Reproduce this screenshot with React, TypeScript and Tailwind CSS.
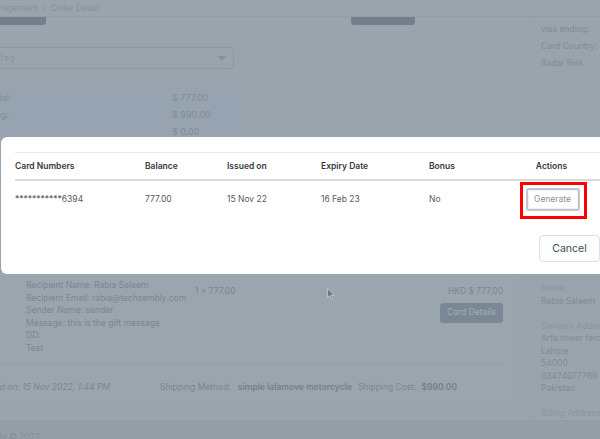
import React from "react";

const font = { fontFamily: "Inter, 'Noto Sans', sans-serif" };

function Line({ children, className = "" }: { children: React.ReactNode; className?: string }) {
  return <div className={`h-[12.5px] leading-[12.5px] whitespace-nowrap ${className}`}>{children}</div>;
}

export default function App() {
  return (
    <div style={font} className="relative w-[600px] h-[439px] overflow-hidden bg-[#9aa4ad] text-[#7b8590] text-[8.5px]">
      {/* header */}
      <div className="h-[17px] border-b border-[#939da6] flex items-center">
        <div className="ml-[-40px] text-[8.5px] text-[#8592a2] flex gap-[5px] whitespace-nowrap">
          <span>Order Management</span>
          <span>/</span>
          <span>Order Detail</span>
        </div>
      </div>

      <div className="flex">
        {/* left column */}
        <div className="w-[515px] shrink-0">
          <div className="flex h-[8px]">
            <div className="ml-[-10px] w-[56px] h-[8px] rounded-b-[3px] bg-[#737f8c]" />
            <div className="ml-[305px] w-[64px] h-[8px] rounded-b-[3px] bg-[#737f8c]" />
          </div>
          <div className="mt-[22px] ml-[-10px] w-[244px] h-[22px] rounded-[3px] border border-[#8e99a5] flex items-center justify-between pl-[8px] pr-[7px] text-[#8b95a0] text-[9px]">
            <span>Tag</span>
            <svg width="8" height="5" viewBox="0 0 8 5"><path d="M0 0h8L4 5z" fill="#87919c" /></svg>
          </div>
          <div className="mt-[14px] ml-[-40px] w-[282px] h-[100px] bg-[#97a3b0] pt-[6px] text-[#818c98] text-[9px]">
            <div className="flex h-[17px] items-center whitespace-nowrap"><span className="w-[212px] pl-[9px]">Sub Total:</span><span>$ 777.00</span></div>
            <div className="flex h-[17px] items-center whitespace-nowrap"><span className="w-[212px] pl-[9px]">Shipping:</span><span>$ 990.00</span></div>
            <div className="flex h-[17px] items-center whitespace-nowrap"><span className="w-[212px] pl-[9px]">Tax:</span><span>$ 0.00</span></div>
          </div>

          {/* gift card panel */}
          <div className="mt-[91px] ml-[-10px] w-[523px] h-[129px] bg-[#9ba5ae] pt-[5px]">
            <div className="flex">
              <div className="ml-[36px] w-[169px]">
                <Line>Recipient Name: Rabia Saleem</Line>
                <Line>Recipient Email: rabia@techsembly.com</Line>
                <Line>Sender Name: sender</Line>
                <Line>Message: this is the gift message</Line>
                <Line>DD:</Line>
                <Line>Test</Line>
              </div>
              <div className="pt-[6px] w-[130px] leading-[12.5px] whitespace-nowrap">1 × 777.00</div>
              <div className="flex-1 flex flex-col items-end pr-[10px] pt-[6px]">
                <div className="leading-[12.5px] whitespace-nowrap">HKD $ 777.00</div>
                <div className="mt-[5px] w-[63px] h-[20px] rounded-[3px] bg-[#7a8795] text-[#a3aeb9] flex items-center justify-center whitespace-nowrap">Card Details</div>
              </div>
            </div>
            <div className="mt-[9px] mr-[8px] border-t border-[#959fa9]" />
            <div className="flex h-[39px] pt-[16px] leading-[14px] whitespace-nowrap">
              <div className="w-[120px] shrink-0 flex justify-end">
                <span className="italic">Ordered on: 15 Nov 2022, 1:44 PM</span>
              </div>
              <span className="ml-[50px] mr-[7px]">Shipping Method:</span>
              <span className="font-semibold text-[#74808b] mr-[6px]">simple lalamove motorcycle</span>
              <span className="mr-[5px]">Shipping Cost:</span>
              <span className="font-semibold text-[#74808b]">$990.00</span>
            </div>
          </div>
        </div>

        {/* right column */}
        <div className="ml-[15px] flex-1 border-l border-[#959fa8] pl-[10px] text-[#818b96] h-[403px]">
          <div className="pt-[4px]">
            <div className="h-[17px] leading-[17px] whitespace-nowrap">visa ending:</div>
            <div className="h-[17px] leading-[17px] whitespace-nowrap">Card Country:</div>
            <div className="h-[17px] leading-[17px] whitespace-nowrap">Radar Risk:</div>
          </div>
          <div className="mt-[210px]">
            <Line className="text-[#8b95a0]">Name:</Line>
            <Line>Rabia Saleem</Line>
            <div className="h-[12.5px]" />
            <Line className="text-[#8b95a0]">Delivery Address:</Line>
            <Line>Arfa tower ferozpur road</Line>
            <Line>Lahore</Line>
            <Line>54000</Line>
            <Line>03474077769</Line>
            <Line>Pakistan</Line>
            <div className="h-[12.5px]" />
            <Line className="text-[#8b95a0]">Billing Address:</Line>
          </div>
        </div>
      </div>

      {/* footer */}
      <div className="absolute left-0 right-0 bottom-0 h-[19px] bg-[#969fa8] border-t border-[#939ca5] text-[#838d97] whitespace-nowrap">
        <span className="block ml-[-42px] mt-[9px] leading-[14px]">Techsembly © 2022</span>
      </div>

      {/* modal */}
      <div className="absolute left-[1px] top-[137px] w-[640px] h-[137px] bg-white rounded-[6px] pl-[14px] pt-[15px]">
        <div className="w-[585px]">
          <div className="grid grid-cols-[130px_82px_94px_108px_76px_95px] border-t border-[#e6e9ec] border-b-2 border-b-[#d5dadf] h-[29px] items-center text-[8.5px] font-semibold text-[#36393e]">
            <span>Card Numbers</span>
            <span>Balance</span>
            <span>Issued on</span>
            <span>Expiry Date</span>
            <span>Bonus</span>
            <span className="text-center pr-[2px]">Actions</span>
          </div>
          <div className="grid grid-cols-[130px_82px_94px_108px_76px_95px] h-[37px] items-center text-[8.5px] text-[#555a60]">
            <span>***********6394</span>
            <span>777.00</span>
            <span>15 Nov 22</span>
            <span>16 Feb 23</span>
            <span>No</span>
            <div className="flex justify-center">
              <div className="relative">
                <button className="w-[54px] h-[23px] rounded-[3px] border-2 border-[#bfc5cc] bg-white text-[8.5px] text-[#8a9099] shadow-[inset_0_0_0_1px_#eef0f2]">Generate</button>
                <div className="absolute -left-[6px] -right-[7px] -top-[6px] -bottom-[8px] border-[3px] border-[#ff0000]" />
              </div>
            </div>
          </div>
          <div className="flex justify-end mt-[17px]">
            <button className="w-[61px] h-[27px] rounded-[4px] border border-[#d6e0ea] bg-[#fcfdff] text-[10.5px] text-[#454a50]">Cancel</button>
          </div>
        </div>
      </div>

      {/* cursor */}
      <svg className="absolute left-[327px] top-[288px]" width="8" height="12" viewBox="0 0 8 12">
        <path d="M0.5 0.5 L0.5 9.5 L2.8 7.5 L4.3 11 L5.8 10.4 L4.4 7 L7.3 7 Z" fill="#6f7880" stroke="#c4ccd3" strokeWidth="0.8" />
      </svg>
    </div>
  );
}
